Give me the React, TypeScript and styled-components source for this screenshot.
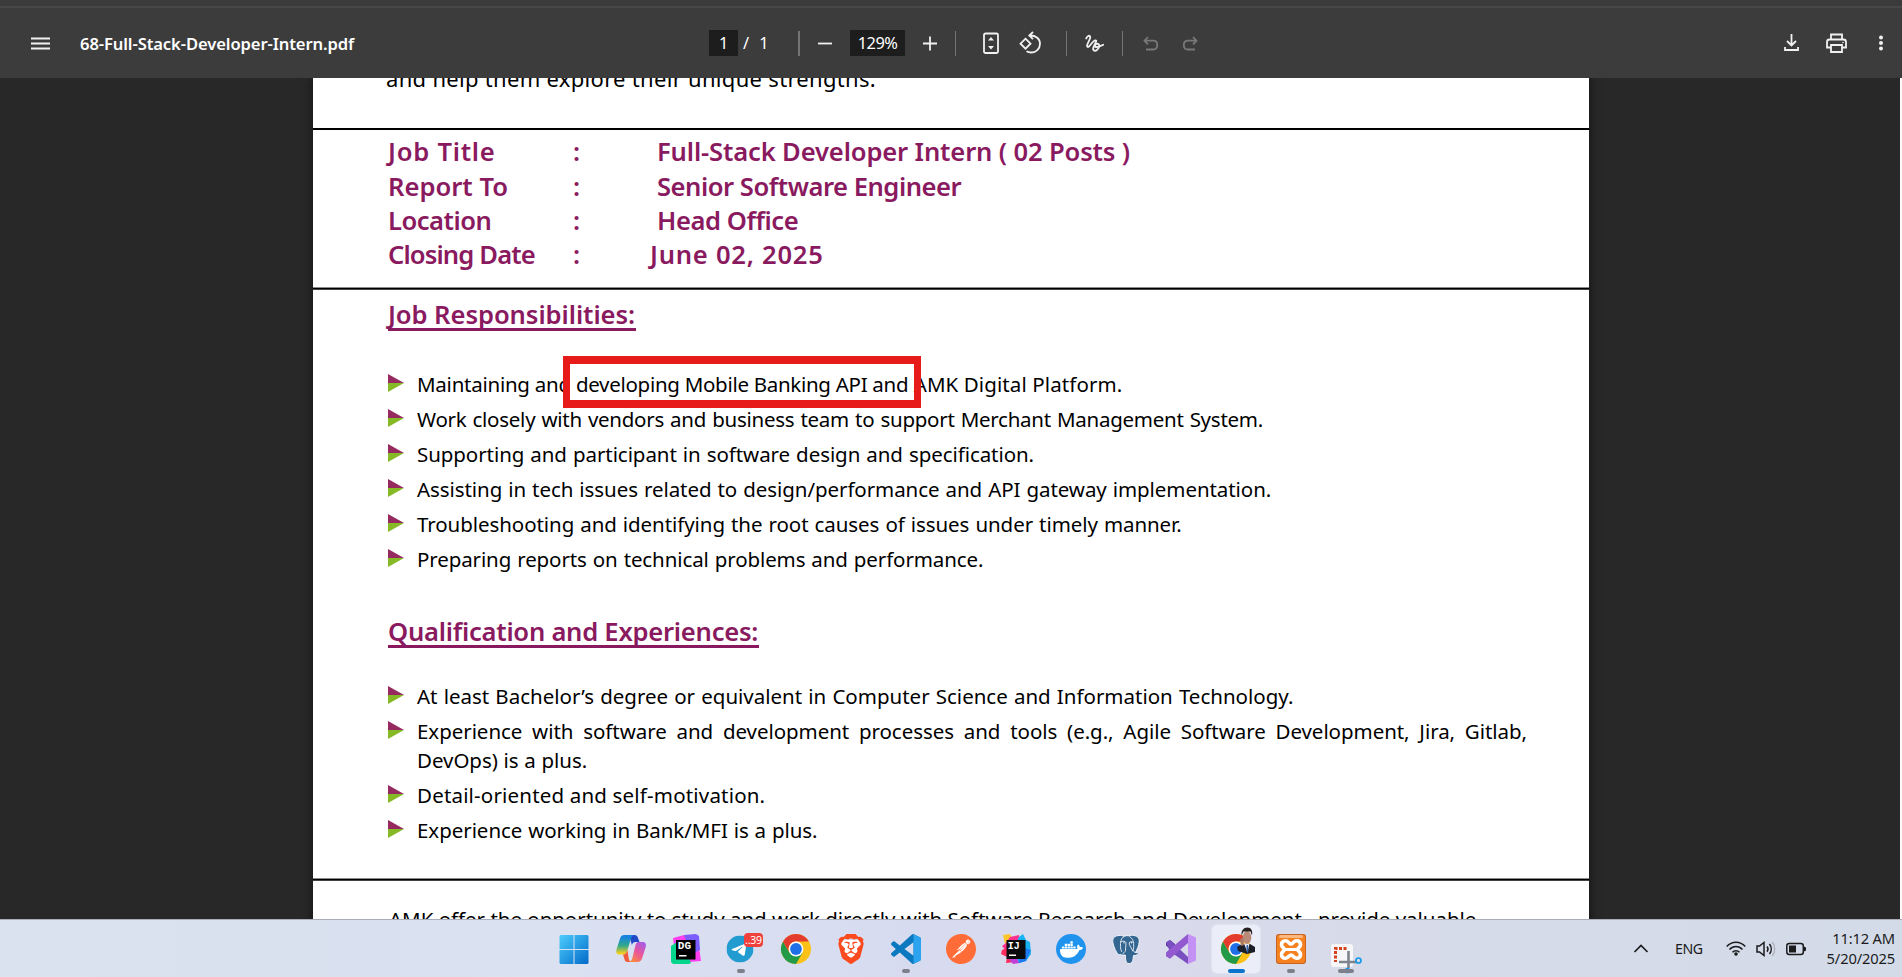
import React from "react";
import styled, { createGlobalStyle } from "styled-components";
import { SiBrave, SiDocker, SiPostman, SiTelegram } from "react-icons/si";

const GlobalStyle = createGlobalStyle`
  * { box-sizing: border-box; }
  body { margin: 0; overflow: hidden; background: #282828; }
`;

const Screen = styled.div`
  width: 1902px;
  height: 977px;
  display: flex;
  flex-direction: column;
  overflow: hidden;
  font-family: "Noto Sans", "Open Sans", sans-serif;
`;

/* ---------- viewer toolbar ---------- */

const TopEdge = styled.div`
  flex: none;
  height: 8px;
  background: #3b3b3b;
  border-bottom: 2px solid #474747;
`;

const Toolbar = styled.header`
  flex: none;
  height: 70px;
  display: flex;
  align-items: center;
  padding: 0 12px 0 28px;
  background: #3c3c3c;
  color: #fff;
`;

const ToolbarSide = styled.div<{ $end?: boolean }>`
  width: 681px;
  display: flex;
  align-items: center;
  justify-content: ${(p) => (p.$end ? "flex-end" : "flex-start")};
`;

const ToolbarCenter = styled.div`
  width: 500px;
  flex: none;
  display: flex;
  align-items: center;
`;

const FileName = styled.span`
  margin-left: 30px;
  font-size: 16.6px;
  font-weight: 600;
  letter-spacing: -0.11px;
  white-space: nowrap;
`;

const NumberBox = styled.span<{ $width: number }>`
  width: ${(p) => p.$width}px;
  height: 26px;
  background: #1d1d1d;
  font-size: 16.4px;
  letter-spacing: -0.5px;
  line-height: 25px;
  text-align: center;
`;

const PageTotal = styled.span`
  width: 60px;
  padding-left: 5px;
  font-size: 16.4px;
  line-height: 26px;
  word-spacing: 6px;
`;

const Divider = styled.span<{ $thick?: boolean }>`
  width: ${(p) => (p.$thick ? 2 : 1)}px;
  height: 25px;
  background: #747474;
`;

const ToolIcon = styled.svg<{ $w: number; $left: number; $dim?: boolean }>`
  flex: none;
  display: block;
  width: ${(p) => p.$w}px;
  height: 24px;
  margin-left: ${(p) => p.$left}px;
  fill: none;
  stroke: ${(p) => (p.$dim ? "#787878" : "#f1f1f1")};
  stroke-width: 1.8;
`;

const Gap = styled.span<{ $w: number }>`
  flex: none;
  width: ${(p) => p.$w}px;
`;

/* ---------- document ---------- */

const Viewer = styled.main`
  flex: none;
  height: 841px;
  display: flex;
  overflow: hidden;
  padding-left: 313px;
  background: #282828;
  border-right: 2px solid #fbfbfb;
`;

const Sheet = styled.article`
  width: 1276px;
  height: 900px;
  flex: none;
  background: #fff;
  color: #000;
  box-shadow: 0 0 9px 1px rgba(0, 0, 0, 0.5);
`;

const Section = styled.section<{ $height: number }>`
  height: ${(p) => p.$height}px;
  padding-left: 75px;
  display: flex;
  flex-direction: column;
  align-items: flex-start;
`;

const Rule = styled.hr<{ $soft?: boolean }>`
  height: ${(p) => (p.$soft ? 3 : 2)}px;
  margin: 0;
  border: 0;
  background: ${(p) => (p.$soft ? "linear-gradient(#8c8c8c 0 1px, #000 1px 2px, #444 2px 3px)" : "#000")};
`;

const Line = styled.p<{ $track?: number; $size?: number }>`
  margin: 0;
  height: 29px;
  line-height: 29px;
  font-size: ${(p) => p.$size ?? 20.5}px;
  letter-spacing: ${(p) => p.$track ?? 0}px;
  white-space: pre;
`;

const LeadLine = styled(Line)`
  margin: -14px 0 0 -2px;
`;

const ClosingLine = styled(Line)`
  margin: 24px 0 0 1px;
`;

const Details = styled.dl`
  margin: 5px 0 0;
  display: grid;
  grid-template-columns: 185px 84px auto;
  grid-template-rows: 35px 34px 34px 34px;
  line-height: 34px;
  font-size: 25.6px;
  font-weight: 600;
  color: #8a1a60;
  white-space: pre;
`;

const Cell = styled.span<{ $track?: number; $shift?: number }>`
  letter-spacing: ${(p) => p.$track ?? 0}px;
  margin-left: ${(p) => p.$shift ?? 0}px;
`;

const Heading = styled.h2<{ $top: number; $track: number; $width: number }>`
  margin: ${(p) => p.$top}px 0 0;
  width: ${(p) => p.$width}px;
  height: 34px;
  padding-top: 1px;
  line-height: 34px;
  font-size: 25.6px;
  font-weight: 600;
  letter-spacing: ${(p) => p.$track}px;
  white-space: nowrap;
  color: #8a1a60;
  border-bottom: 3px solid #8a1a60;
`;

const Bullets = styled.ul<{ $top: number }>`
  list-style: none;
  margin: ${(p) => p.$top}px 0 0;
  padding: 0;
`;

const Item = styled.li`
  position: relative;
  display: flex;
  align-items: flex-start;
  width: 1140px;
  padding: 3px 0;
  font-size: 20.5px;
  line-height: 29px;
`;

const ItemText = styled.div<{ $justify?: boolean; $track?: number; $words?: number }>`
  width: 1110px;
  margin-left: 12px;
  letter-spacing: ${(p) => p.$track ?? 0}px;
  word-spacing: ${(p) => p.$words ?? 0}px;
  text-align: ${(p) => (p.$justify ? "justify" : "left")};
`;

const Phrase = styled.span<{ $track: number }>`
  letter-spacing: ${(p) => p.$track}px;
`;

const Marker = styled.svg`
  flex: none;
  width: 17px;
  height: 18px;
  margin-top: 4px;
`;

const RedFrame = styled.div`
  position: absolute;
  left: 175px;
  top: -11px;
  width: 358px;
  height: 52px;
  border: 8px solid #e81b1b;
  border-width: 8px 7px;
`;

/* ---------- taskbar ---------- */

const Taskbar = styled.footer`
  flex: none;
  height: 58px;
  display: flex;
  border-top: 1px solid #a9acb9;
  background: linear-gradient(90deg, #d9e2ee 0, #dae1f1 30%, #d7dbf0 48%, #d9daeb 60%, #d5dbe8 80%, #d4dbe8 100%);
`;

const Apps = styled.nav`
  display: flex;
  margin-left: 549px;
  width: 825px;
`;

const Slot = styled.div<{ $active?: boolean }>`
  position: relative;
  width: 48px;
  height: 48px;
  margin: 5px 4px 0 3px;
  padding-top: 9px;
  display: flex;
  flex-direction: column;
  align-items: center;
  gap: 5px;
  border-radius: 5px;
  background: ${(p) => (p.$active ? "#ebedf8" : "transparent")};
  box-shadow: ${(p) => (p.$active ? "0 0 1px 1px #e1e3ef" : "none")};
`;

const StartSlot = styled(Slot)`
  margin: 5px 6px 0 1px;
`;

const Art = styled.svg`
  display: block;
  flex: none;
  width: 30px;
  height: 30px;
  overflow: visible;
`;

const Indicator = styled.span<{ $w: number; $active?: boolean }>`
  width: ${(p) => p.$w}px;
  height: 4px;
  border-radius: 2px;
  background: ${(p) => (p.$active ? "#0a74cf" : "#7d808a")};
`;

const Badge = styled.span`
  position: absolute;
  left: 27px;
  top: 8px;
  width: 19px;
  height: 14px;
  border-radius: 4px;
  background: #f0403c;
  color: #fff;
  font-size: 10.5px;
  letter-spacing: -0.2px;
  line-height: 14px;
  text-align: center;
`;

const LogoText = styled.text`
  fill: #fff;
  font-family: "Liberation Mono", monospace;
  font-weight: 700;
`;

const Tray = styled.div`
  flex: 1;
  display: flex;
  align-items: flex-start;
  padding: 0 7px 0 259px;
  color: #1b1b1d;
`;

const TrayIcon = styled.svg<{ $w: number; $left: number }>`
  flex: none;
  width: ${(p) => p.$w}px;
  height: 20px;
  margin: 19px 0 0 ${(p) => p.$left}px;
  fill: none;
  stroke: #1b1b1d;
  stroke-width: 1.5;
  overflow: visible;
`;

const Language = styled.span`
  margin: 18px 0 0 27px;
  width: 29px;
  font-size: 14.2px;
  line-height: 22px;
  letter-spacing: -0.5px;
`;

const Clock = styled.div`
  margin-left: auto;
  padding-top: 8px;
  text-align: right;
  font-size: 14.7px;
  line-height: 20px;
  letter-spacing: -0.15px;
`;

interface Entry {
  text: string;
  track: number;
  words?: number;
  justify?: boolean;
}

const RESPONSIBILITIES: Entry[] = [
  { text: "Work closely with vendors and business team to support Merchant Management System.", track: -0.26, words: 1 },
  { text: "Supporting and participant in software design and specification.", track: -0.07, words: 0.8 },
  { text: "Assisting in tech issues related to design/performance and API gateway implementation.", track: -0.07, words: 0.8 },
  { text: "Troubleshooting and identifying the root causes of issues under timely manner.", track: -0.07, words: 0.8 },
  { text: "Preparing reports on technical problems and performance.", track: -0.11, words: 0.8 },
];

const QUALIFICATIONS: Entry[] = [
  { text: "At least Bachelor’s degree or equivalent in Computer Science and Information Technology.", track: 0, words: 0.8 },
  {
    text: "Experience with software and development processes and tools (e.g., Agile Software Development, Jira, Gitlab, DevOps) is a plus.",
    track: -0.05,
    words: 0.5,
    justify: true,
  },
  { text: "Detail-oriented and self-motivation.", track: 0.18 },
  { text: "Experience working in Bank/MFI is a plus.", track: -0.05, words: 0.6 },
];

function BulletMark() {
  return (
    <Marker viewBox="0 0 17 18">
      <path d="M0 0L16 9H0z" fill="#96295f" />
      <path d="M0 9H16L0 18z" fill="#86b926" />
    </Marker>
  );
}

function BulletItem({ entry }: { entry: Entry }) {
  return (
    <Item>
      <BulletMark />
      <ItemText $track={entry.track} $words={entry.words} $justify={entry.justify}>
        {entry.text}
      </ItemText>
    </Item>
  );
}

function WindowsLogo() {
  return (
    <Art viewBox="0 0 30 30">
      <defs>
        <linearGradient id="win" gradientUnits="userSpaceOnUse" x1="0" y1="0" x2="30" y2="30">
          <stop offset="0" stopColor="#4fd0ff" />
          <stop offset="1" stopColor="#0069c8" />
        </linearGradient>
      </defs>
      <path fill="url(#win)" d="M1.500 1H14.500V15H.5V2zM15.500 1H28.500L29.500 2V15H15.500zM.5 16H14.500V30H1.500L.5 29zM15.500 16H29.500V29L28.500 30H15.500z" />
    </Art>
  );
}

function CopilotLogo() {
  return (
    <Art viewBox="0 0 30 30">
      <defs>
        <linearGradient id="cpA" x1="0" y1="0" x2="0" y2="1">
          <stop offset="0.1" stopColor="#1583e0" />
          <stop offset="0.55" stopColor="#32a98a" />
          <stop offset="0.95" stopColor="#f5cf1b" />
        </linearGradient>
        <linearGradient id="cpB" x1="0.8" y1="0" x2="0.2" y2="1">
          <stop offset="0" stopColor="#a55be8" />
          <stop offset="0.5" stopColor="#e9569b" />
          <stop offset="1" stopColor="#fb8a3c" />
        </linearGradient>
      </defs>
      <path fill="#2049c8" d="M13 1h5.500c2 0 2.800 1 3.300 2.500L23.500 8h-4c-2 0-3 1-3.600 3z" />
      <path fill="url(#cpA)" d="M8.500 1H18c-2 .5-2.600 2-3.200 4L11.500 16c-.8 2.600-1.700 4.500-4.500 4.500H3.500C.8 20.500-.3 18.500.5 15.500L4 4.500C4.800 2 6.200 1 8.500 1z" />
      <path fill="#ef5b3c" d="M7 20.500c2.400 0 3.700-1.600 4.500-4.500l1 7c.4 3 1 4.500 3 5h-3.800c-2 0-2.700-1-3.200-2.700z" />
      <path fill="url(#cpB)" d="M22 8h4.500c2.900 0 4 2 3.200 5l-3.500 11c-.8 2.700-2.200 4-4.700 4H13c2-.5 2.800-2 3.400-4L19 13c.7-3 1.300-4.600 3-5z" />
    </Art>
  );
}

function DataGripLogo() {
  return (
    <Art viewBox="0 0 30 30">
      <path fill="#ff3ff0" d="M2 4l11-3 15 12 2 14-12 1L3 12z" />
      <path fill="#7a5cff" d="M13 1L25 0l3 2 1 14-8 4z" />
      <path fill="#06d68c" d="M0 12l6-4 12 16 2 5-2 1H2L0 28z" />
      <path fill="#000" d="M5 6h19.500v19.500H5z" />
      <LogoText x="6.800" y="15" fontSize="11">DG</LogoText>
      <path fill="#fff" d="M8 21h7.500v1.500H8z" />
    </Art>
  );
}

function TelegramLogo() {
  return (
    <Art viewBox="0 0 30 30">
      <circle cx="14" cy="15" r="13" fill="#fff" />
      <SiTelegram x={0.5} y={1.5} size={27} color="#229bd0" />
    </Art>
  );
}

function ChromeLogo() {
  return (
    <Art viewBox="0 0 30 30">
      <circle cx="15" cy="15" r="15" fill="#fbc116" />
      <path fill="#229a48" d="M2 7.500A15 15 0 0 0 15 30L21.500 18.700 15 15 8.500 18.700z" />
      <path fill="#e33b2e" d="M2 7.500A15 15 0 0 1 28 7.500H15A7.500 7.500 0 0 0 8.500 18.700z" />
      <circle cx="15" cy="15" r="7.400" fill="#fff" />
      <circle cx="15" cy="15" r="5.900" fill="#1f6fe6" />
    </Art>
  );
}

function BraveLogo() {
  return (
    <Art viewBox="0 0 30 30">
      <path fill="#fff" d="M8 6h14l4 6-5 13-6 4-6-4L4 12z" />
      <SiBrave size={30} color="#fb4a1d" />
    </Art>
  );
}

function CodeLogo() {
  return (
    <Art viewBox="0 0 24 24">
      <path
        fill="#0b79bf"
        d="M23.150 2.587L18.210.21a1.494 1.494 0 0 0-1.705.29l-9.460 8.630-4.120-3.128a.999.999 0 0 0-1.276.057L.327 7.261A1 1 0 0 0 .326 8.740L3.899 12 .326 15.260a1 1 0 0 0 .001 1.479L1.650 17.940a.999.999 0 0 0 1.276.057l4.120-3.128 9.460 8.630a1.492 1.492 0 0 0 1.704.290l4.942-2.377A1.500 1.500 0 0 0 24 20.060V3.939a1.500 1.500 0 0 0-.850-1.352zm-5.146 14.861L10.826 12l7.178-5.448v10.896z"
      />
      <path fill="#2ba3ee" d="M18 .15l5.150 2.437a1.500 1.500 0 0 1 .850 1.352V20.060a1.500 1.500 0 0 1-.850 1.352L18 23.850z" />
    </Art>
  );
}

function PostmanLogo() {
  return (
    <Art viewBox="0 0 30 30">
      <circle cx="15" cy="15" r="14.500" fill="#fff" />
      <SiPostman size={30} color="#ff6c37" />
    </Art>
  );
}

function IdeaLogo() {
  return (
    <Art viewBox="0 0 30 30">
      <path fill="#fcc52a" d="M2 1l7-1 4 8-8 6z" />
      <path fill="#ff318c" d="M9 3L18 1l2 10L8 20 1 12l4-3z" />
      <path fill="#ff2b5e" d="M1 16l9-4 4 16-9 1 1-6-6-3z" />
      <path fill="#c23fd8" d="M7 24l9-2 3 7-7 1z" />
      <path fill="#16b2f2" d="M17 4l5-4 3 6 4 2 1 12-5 7-7 2-3-8z" />
      <path fill="#1b78f0" d="M20 13l10 3-5 11-7 2z" />
      <path fill="#0a0a0c" d="M5.500 6h19v19h-19z" />
      <LogoText x="6.800" y="14.500" fontSize="10">IJ</LogoText>
      <path fill="#fff" d="M8 20.500h7V22H8z" />
    </Art>
  );
}

function DockerLogo() {
  return (
    <Art viewBox="0 0 30 30">
      <circle cx="15" cy="15" r="15" fill="#1f93ee" />
      <SiDocker x={4} y={4} size={23} color="#fff" />
    </Art>
  );
}

function PostgresLogo() {
  return (
    <Art viewBox="0 0 30 30">
      <path
        fill="#336791"
        stroke="#f1f4f9"
        strokeWidth="1"
        d="M8 1.500c2-.3 3.500.2 5 .8 1.500-.6 3-.8 5-.6 1-.4 3-.6 5-.2 4 .8 5.500 3 5.200 6.500-.3 3.500-2 7.500-3.700 10.500 1.500.5 3 .2 3.800.5-.8 1.700-3.300 2.700-5.800 2.500-.5 2.500-.3 5-1.500 6.800-1.200 1.700-4.500 1.700-5.500 0-1-1.800-1-4.800-1.200-7.300-1.800.3-4 0-5-.6-1 .3-2.300.3-3.300-1.400C3.500 15 1.500 9 1.700 6.500 2 3 4.500 1.700 8 1.500z"
      />
      <g fill="none" stroke="#f1f4f9" strokeWidth="0.900" strokeLinecap="round">
        <path d="M10.500 17.500c-1.200-2.500-1.500-7-.5-11 .6-2 1.700-3.300 3-4M10 7.800c2-1 4.200-.8 4.800.7.6 2-.5 4.500-.2 6.500.3 1.800-1 3.500-2.600 4.500" />
        <path d="M18 2c2.500 1.500 5 5 4.600 7.500-.2 2 .5 3.500-.3 6-.3 1.500.6 2.700 2.200 3M22.500 8.500c-1.500-1.200-4-1-4.300.4-.3 2.500 2.600 5 3.500 8" />
      </g>
      <circle cx="13" cy="8.800" r="0.700" fill="#f1f4f9" />
      <circle cx="20.500" cy="8.800" r="0.700" fill="#f1f4f9" />
    </Art>
  );
}

function VisualStudioLogo() {
  return (
    <Art viewBox="0 0 30 30">
      <path fill="#52329a" d="M0 8.500L4 6l5 4v10l-5 4.500-4-2.500V19l4-4-4-3.500z" />
      <path fill="#7a4fc0" d="M0 8.500L4 6l18 17v7L4 17.500z" />
      <path fill="#9259d0" d="M0 22L4 24.500 22 9V0L4 15 0 19z" />
      <path fill="#c491f4" d="M22 0l8 3.500v23L22 30z" />
    </Art>
  );
}

function Avatar() {
  return (
    <g>
      <path fill="#1b1f2a" d="M16 13l5-3h8l5 3v5l-8 2-9-3z" />
      <path fill="#e8edf5" d="M23 9.500h5.500l-2 9z" />
      <path fill="#3264a8" d="M25.500 11h1.500l.5 6-1 2-1-2z" />
      <ellipse cx="26" cy="3.500" rx="4.300" ry="6.500" fill="#b98a78" />
      <path fill="#25201f" d="M20.500 1.500c-.5-5 2-8 6-8 3.500 0 5.500 3 4.500 8l-1.500-4h-7z" />
      <path fill="#a87a6a" d="M19 5l3-1 1 7-3 1z" />
    </g>
  );
}

function ActiveChromeLogo() {
  return (
    <Art viewBox="0 0 30 30">
      <ChromeLogo />
      <Avatar />
    </Art>
  );
}

function XamppLogo() {
  return (
    <Art viewBox="0 0 30 30">
      <rect width="30" height="30" rx="3" fill="#c9631f" />
      <rect x="1" y="1" width="28" height="28" rx="2.500" fill="#f5811f" />
      <rect x="3" y="1" width="24" height="3" rx="1.500" fill="#fbb982" />
      <path
        fill="none"
        stroke="#fff"
        strokeWidth="3.600"
        d="M9.500 6.800c3 0 3.600 3.200 5.500 3.200s2.500-3.200 5.500-3.200c2.600 0 4 1.500 4 4 0 2.600-3 3.200-3 4.700s3 2.100 3 4.700c0 2.500-1.400 4-4 4-3 0-3.600-3.200-5.500-3.200s-2.500 3.200-5.500 3.200c-2.600 0-4-1.500-4-4 0-2.600 3-3.200 3-4.700s-3-2.100-3-4.700c0-2.500 1.400-4 4-4z"
      />
      <path stroke="#fff" strokeWidth="3" d="M10 15.500h10" />
    </Art>
  );
}

function SnippingLogo() {
  return (
    <Art viewBox="0 0 30 30">
      <rect x="0" y="10" width="22" height="23" rx="3" fill="#f7f7f9" />
      <path fill="none" stroke="#d6401d" strokeWidth="3" strokeDasharray="3 1.500" d="M15.500 14.500H4.500V28" />
      <path fill="none" stroke="#7e848c" strokeWidth="2.600" d="M17.500 17v17M8 28h18" />
      <circle cx="27.500" cy="26.500" r="2.500" fill="none" stroke="#159be8" strokeWidth="1.700" />
      <circle cx="16.500" cy="36.500" r="2" fill="none" stroke="#159be8" strokeWidth="1.700" />
    </Art>
  );
}

export default function App() {
  return (
    <Screen>
      <GlobalStyle />
      <TopEdge />
      <Toolbar>
        <ToolbarSide>
          <ToolIcon $w={19} $left={3} viewBox="0 0 19 24">
            <path d="M0 7.500h19M0 12.500h19M0 17.500h19" />
          </ToolIcon>
          <FileName>68-Full-Stack-Developer-Intern.pdf</FileName>
        </ToolbarSide>
        <ToolbarCenter>
          <NumberBox $width={29}>1</NumberBox>
          <PageTotal>/ 1</PageTotal>
          <Divider $thick />
          <ToolIcon $w={14} $left={18} viewBox="0 0 14 24">
            <path d="M0 12.500h14" />
          </ToolIcon>
          <Gap $w={18} />
          <NumberBox $width={55}>129%</NumberBox>
          <ToolIcon $w={14} $left={18} viewBox="0 0 14 24">
            <path d="M0 12.500h14M7 5.500v14" />
          </ToolIcon>
          <Gap $w={18} />
          <Divider />
          <ToolIcon $w={16} $left={27} viewBox="0 0 16 24">
            <rect x="1" y="2.500" width="14" height="19.500" rx="1.500" />
            <path fill="#f1f1f1" stroke="none" d="M8 6l3 3.500H5zM8 18.500L5 15h6z" />
          </ToolIcon>
          <ToolIcon $w={23} $left={20} viewBox="0 0 23 24">
            <path d="M6.500 7.700l5 5-5 5-5-5z" />
            <path d="M11 4.500c6 0 10 3.200 10 8.300s-4 8.700-9 8.700c-1.800 0-3.200-.5-4.500-1.200M14 1l-3.700 3.600L14 8.200" />
          </ToolIcon>
          <Gap $w={24} />
          <Divider />
          <ToolIcon $w={19} $left={18} viewBox="0 0 19 24" strokeLinecap="round">
            <path d="M1.200 7.500C2 5 4.600 3.800 5.200 5.700 6 8.500 1 13 2.200 15.500 4 18 7 9.800 10.300 9.300 13.500 9.300 7.200 15.500 8.200 18.700c1.400 3 6.600-1 6.100-4.200-.4-2.600-3.900-2.100-4.300.2-.4 2.300 4 1.300 8.300-.9" />
          </ToolIcon>
          <Gap $w={18} />
          <Divider />
          <ToolIcon $w={15} $left={20} $dim viewBox="0 0 15 24">
            <path d="M5 6L1.500 9.700 5 13.400M2 9.700h8.300c2.400 0 3.900 1.600 3.900 4.200s-1.500 4.600-3.900 4.600H3" />
          </ToolIcon>
          <ToolIcon $w={15} $left={25} $dim viewBox="0 0 15 24">
            <path d="M10 6l3.500 3.700L10 13.400M13 9.700H4.700C2.300 9.700.8 11.300.8 13.900s1.500 4.600 3.900 4.600H12" />
          </ToolIcon>
        </ToolbarCenter>
        <ToolbarSide $end>
          <ToolIcon $w={15} $left={0} viewBox="0 0 15 24">
            <path d="M7.500 3v11.500M3 10l4.500 4.500L12 10M1 16v3h13v-3" />
          </ToolIcon>
          <ToolIcon $w={21} $left={27} viewBox="0 0 21 24">
            <path d="M5 8.500V3.500h11v5M5 16.500H1V11c0-1.700.8-2.500 2.500-2.500h14c1.700 0 2.500.8 2.500 2.500v5.500h-4M5 14h11v7H5z" />
            <circle cx="17" cy="11.500" r="0.800" fill="#f1f1f1" stroke="none" />
          </ToolIcon>
          <ToolIcon $w={6} $left={31} viewBox="0 0 6 24">
            <g fill="#f1f1f1" stroke="none">
              <circle cx="3" cy="6.500" r="2" />
              <circle cx="3" cy="12" r="2" />
              <circle cx="3" cy="17.500" r="2" />
            </g>
          </ToolIcon>
          <Gap $w={6} />
        </ToolbarSide>
      </Toolbar>

      <Viewer>
        <Sheet>
          <Section $height={50}>
            <LeadLine $size={22} $track={0.3}>and help them explore their unique strengths.</LeadLine>
          </Section>
          <Rule />
          <Section $height={157}>
            <Details>
              <Cell $track={0.75}>Job Title</Cell>
              <Cell>:</Cell>
              <Cell $track={-0.15}>Full-Stack Developer Intern ( 02 Posts )</Cell>
              <Cell $track={0}>Report To</Cell>
              <Cell>:</Cell>
              <Cell $track={-0.48}>Senior Software Engineer</Cell>
              <Cell $track={-0.5}>Location</Cell>
              <Cell>:</Cell>
              <Cell $track={-0.45}>Head Office</Cell>
              <Cell $track={-0.87}>Closing Date</Cell>
              <Cell>:</Cell>
              <Cell $track={0.75} $shift={-7}>June 02, 2025</Cell>
            </Details>
          </Section>
          <Rule $soft />
          <Section $height={588}>
            <Heading $top={7} $track={-0.07} $width={248}>Job Responsibilities:</Heading>
            <Bullets $top={36}>
              <Item>
                <BulletMark />
                <ItemText>
                  <Phrase $track={-0.25}>{"Maintaining and "}</Phrase>
                  <Phrase $track={-0.29}>developing Mobile Banking API and</Phrase>
                  <Phrase $track={0.1}>{" AMK Digital Platform."}</Phrase>
                </ItemText>
                <RedFrame />
              </Item>
              {RESPONSIBILITIES.map((entry) => (
                <BulletItem key={entry.text} entry={entry} />
              ))}
            </Bullets>
            <Heading $top={37} $track={-0.25} $width={371}>Qualification and Experiences:</Heading>
            <Bullets $top={31}>
              {QUALIFICATIONS.map((entry) => (
                <BulletItem key={entry.text} entry={entry} />
              ))}
            </Bullets>
          </Section>
          <Rule $soft />
          <Section $height={97}>
            <ClosingLine $track={-0.02}>
              {"AMK offer the opportunity to study and work directly with Software Research and Development,  provide valuable"}
            </ClosingLine>
          </Section>
        </Sheet>
      </Viewer>

      <Taskbar>
        <Apps>
          <StartSlot><WindowsLogo /></StartSlot>
          <Slot><CopilotLogo /></Slot>
          <Slot><DataGripLogo /></Slot>
          <Slot>
            <TelegramLogo />
            <Indicator $w={8} />
            <Badge>..39</Badge>
          </Slot>
          <Slot><ChromeLogo /></Slot>
          <Slot><BraveLogo /></Slot>
          <Slot>
            <CodeLogo />
            <Indicator $w={8} />
          </Slot>
          <Slot><PostmanLogo /></Slot>
          <Slot><IdeaLogo /></Slot>
          <Slot><DockerLogo /></Slot>
          <Slot><PostgresLogo /></Slot>
          <Slot><VisualStudioLogo /></Slot>
          <Slot $active>
            <ActiveChromeLogo />
            <Indicator $w={17} $active />
          </Slot>
          <Slot>
            <XamppLogo />
            <Indicator $w={8} />
          </Slot>
          <Slot>
            <SnippingLogo />
            <Indicator $w={16} />
          </Slot>
        </Apps>
        <Tray>
          <TrayIcon $w={14} $left={1} viewBox="0 0 14 20">
            <path d="M.5 13L7 6.500l6.500 6.500" strokeWidth="1.700" />
          </TrayIcon>
          <Language>ENG</Language>
          <TrayIcon $w={20} $left={22} viewBox="0 0 20 20">
            <path d="M.7 7.500C6 1.800 14 1.800 19.300 7.500M3.500 10.500c3.700-4 9.300-4 13 0M6.500 13.300c2-2.200 5-2.200 7 0" />
            <circle cx="10" cy="15" r="1.800" fill="#1b1b1d" stroke="none" />
          </TrayIcon>
          <TrayIcon $w={20} $left={10} viewBox="0 0 20 20">
            <path d="M1 7v6h2.500L8 16.500v-13L3.500 7zM11 7.500c1.200 1.500 1.200 3.700 0 5.200M13.500 5c2.300 3 2.300 7.200 0 10" />
            <path d="M16.300 3c3.200 4.200 3.200 10 0 14" stroke="#b0b4bf" />
          </TrayIcon>
          <TrayIcon $w={20} $left={10} viewBox="0 0 20 20">
            <rect x="0.800" y="4.500" width="16.500" height="11" rx="2.500" />
            <path fill="#1b1b1d" stroke="none" d="M3 6.500h7v7H3zM18 7.500l2 1v3l-2 1z" />
          </TrayIcon>
          <Clock>
            <div>11:12 AM</div>
            <div>5/20/2025</div>
          </Clock>
        </Tray>
      </Taskbar>
    </Screen>
  );
}
